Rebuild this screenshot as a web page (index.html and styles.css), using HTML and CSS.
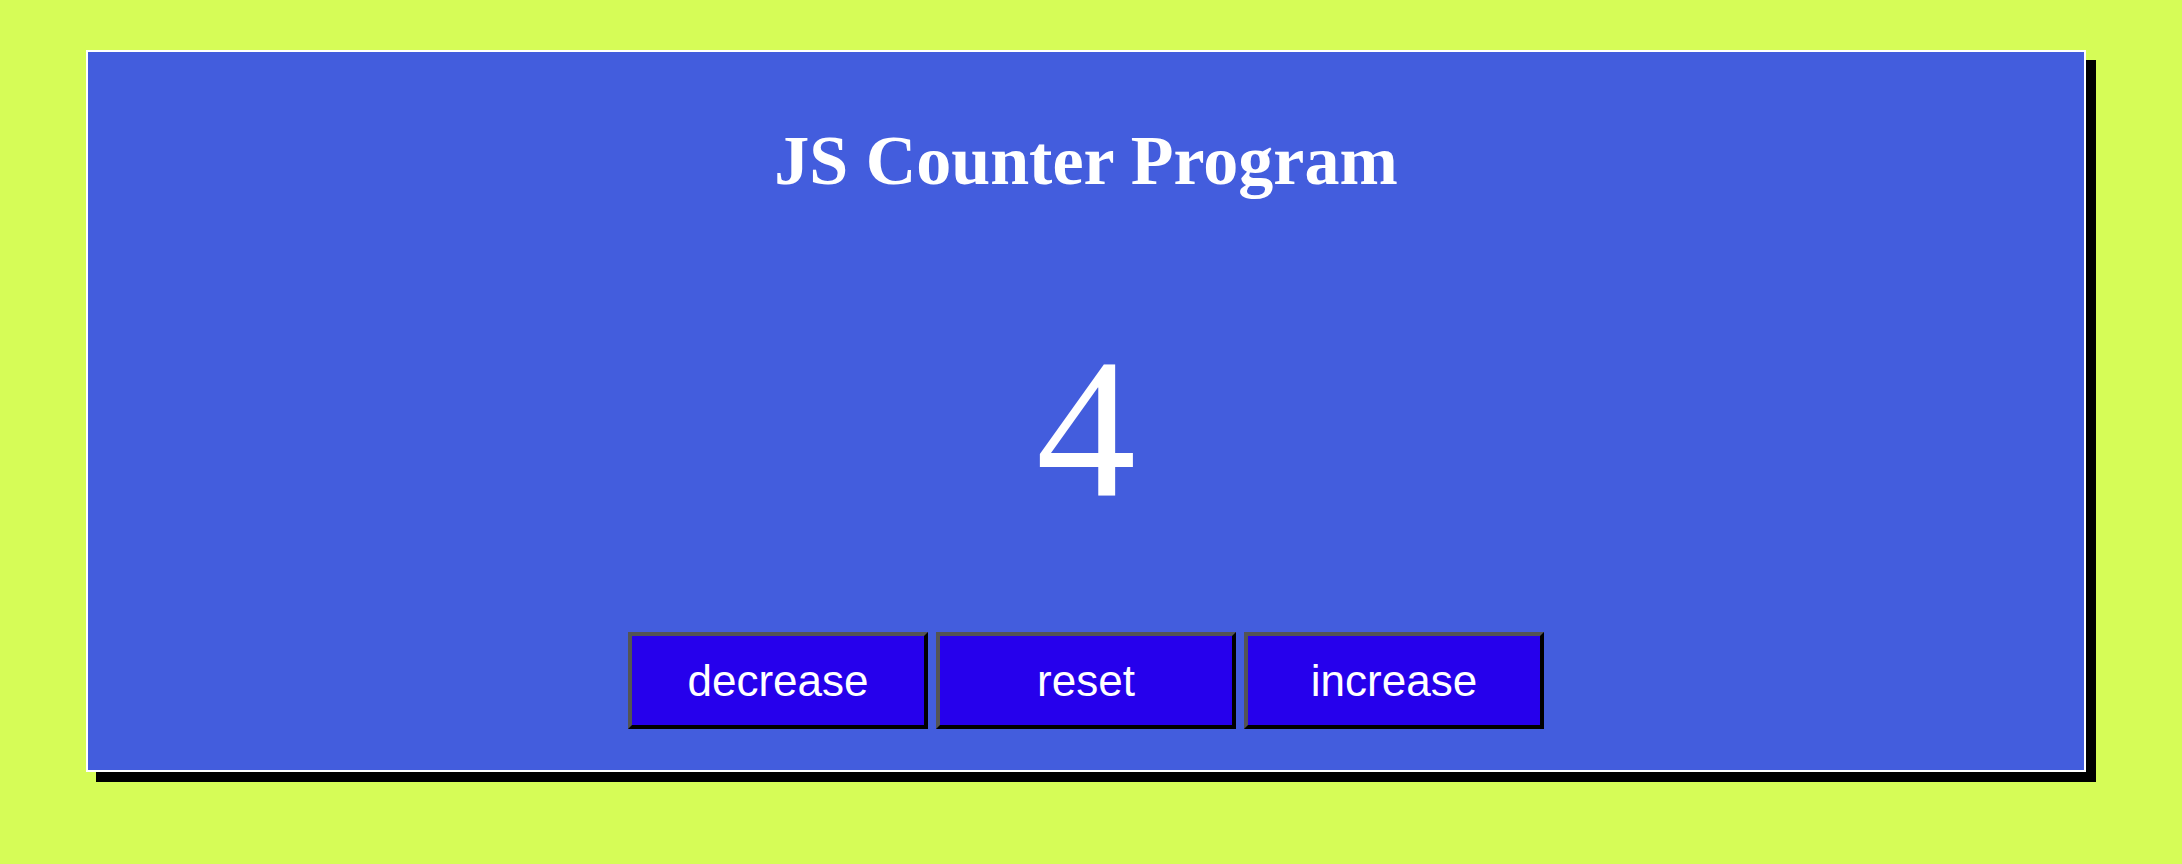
FILE: index.html
```html
<!DOCTYPE html>
<html lang="en">
<head>
<meta charset="utf-8">
<title>JS Counter Program</title>
<link rel="stylesheet" href="styles.css">
</head>
<body>
  <div class="card">
    <h1 class="title">JS Counter Program</h1>
    <div class="count">4</div>
    <div class="controls">
      <button class="btn">decrease</button>
      <button class="btn">reset</button>
      <button class="btn">increase</button>
    </div>
  </div>
</body>
</html>
```
FILE: styles.css
```css
html, body {
  margin: 0;
  padding: 0;
}
body {
  background: #d6fc57;
  width: 2182px;
  height: 864px;
  overflow: hidden;
  font-family: "Liberation Serif", "Times New Roman", serif;
}
.card {
  box-sizing: border-box;
  width: 2000px;
  height: 722px;
  margin: 50px 0 0 86px;
  background: #435ddd;
  border: 2px solid #ffffff;
  box-shadow: 10px 10px 0 #000000;
  display: flex;
  flex-direction: column;
  align-items: center;
  padding: 74px 0 41px;
}
.title {
  margin: 0 0 133px;
  font-size: 70px;
  line-height: 70px;
  height: 70px;
  font-weight: bold;
  color: #ffffff;
  font-family: "Liberation Serif", "Times New Roman", serif;
}
.count {
  font-size: 200px;
  line-height: 200px;
  height: 200px;
  color: #ffffff;
  margin-bottom: 103px;
}
.controls {
  display: flex;
  gap: 8px;
}
.btn {
  box-sizing: border-box;
  width: 300px;
  height: 97px;
  padding: 0;
  margin: 0;
  background: #2600ec;
  color: #ffffff;
  font-family: "Liberation Sans", Arial, sans-serif;
  font-size: 44px;
  border-style: solid;
  border-width: 4px;
  border-color: #545454 #000000 #000000 #545454;
  cursor: pointer;
}
```
